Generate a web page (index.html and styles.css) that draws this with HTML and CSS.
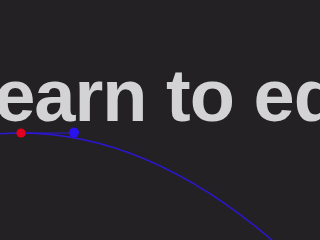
FILE: index.html
```html
<!DOCTYPE html>
<html lang="en">
<head>
<meta charset="utf-8">
<title>Learn to edit</title>
<link rel="stylesheet" href="styles.css">
</head>
<body>
<main class="stage">
  <h1 class="headline">Learn to edit</h1>
  <svg class="curve" width="320" height="240" viewBox="0 0 320 240" aria-hidden="true">
    <path class="curve-path" d="M0 133.75 Q145 123.4 290 256"/>
    <line class="handle" x1="21" y1="133" x2="74" y2="133"/>
    <circle class="anchor" cx="21" cy="133" r="4.6"/>
    <circle class="control" cx="74" cy="132.6" r="5"/>
  </svg>
</main>
</body>
</html>
```
FILE: styles.css
```css
html, body {
  margin: 0;
  padding: 0;
  background: #232124;
  overflow: hidden;
}
.stage {
  position: relative;
  width: 320px;
  height: 240px;
  overflow: hidden;
}
.headline {
  margin: 59px 0 0 -50px;
  font-family: "Liberation Sans", Arial, sans-serif;
  font-weight: 700;
  font-size: 74px;
  line-height: 74px;
  letter-spacing: -1px;
  color: #d3d2d5;
  white-space: nowrap;
}
.curve {
  position: absolute;
  left: 0;
  top: 0;
}
.curve-path {
  fill: none;
  stroke: #2c16d4;
  stroke-width: 1.4;
}
.handle {
  stroke: #2c16d4;
  stroke-width: 1;
}
.anchor {
  fill: #e2001c;
}
.control {
  fill: #2a12ee;
}
```
